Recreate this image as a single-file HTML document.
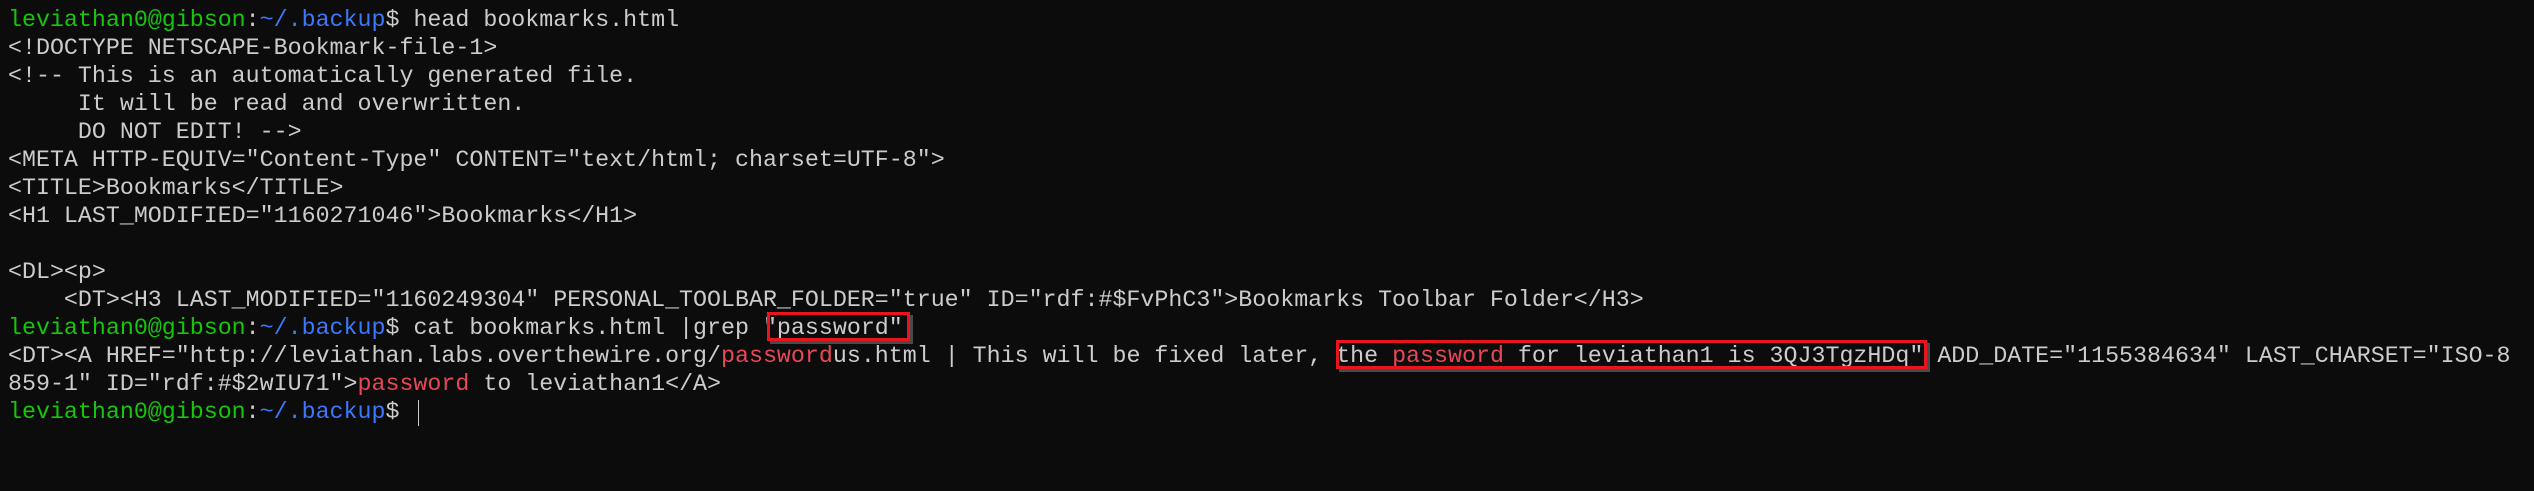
<!DOCTYPE html>
<html><head><meta charset="utf-8"><style>
html,body{margin:0;padding:0;background:#0c0c0c;width:2534px;height:491px;overflow:hidden}
pre{margin:0;position:absolute;left:8px;top:6px;font-family:"Liberation Mono",monospace;font-size:23.3px;line-height:28px;color:#cccccc;white-space:pre}
.g{color:#16c60c}.b{color:#3b78ff}.r{color:#e74856}
.box{position:absolute;border:3px solid #e8141e;box-shadow:3px 3px 0 #4a4a4a}
.cur{position:absolute;left:418px;top:400px;width:1px;height:26px;background:#ccc}
</style></head><body>
<pre><span class="g">leviathan0@gibson</span>:<span class="b">~/.backup</span>$ head bookmarks.html
&lt;!DOCTYPE NETSCAPE-Bookmark-file-1&gt;
&lt;!-- This is an automatically generated file.
     It will be read and overwritten.
     DO NOT EDIT! --&gt;
&lt;META HTTP-EQUIV="Content-Type" CONTENT="text/html; charset=UTF-8"&gt;
&lt;TITLE&gt;Bookmarks&lt;/TITLE&gt;
&lt;H1 LAST_MODIFIED="1160271046"&gt;Bookmarks&lt;/H1&gt;

&lt;DL&gt;&lt;p&gt;
    &lt;DT&gt;&lt;H3 LAST_MODIFIED="1160249304" PERSONAL_TOOLBAR_FOLDER="true" ID="rdf:#$FvPhC3"&gt;Bookmarks Toolbar Folder&lt;/H3&gt;
<span class="g">leviathan0@gibson</span>:<span class="b">~/.backup</span>$ cat bookmarks.html |grep "password"
&lt;DT&gt;&lt;A HREF="http://leviathan.labs.overthewire.org/<span class="r">password</span>us.html | This will be fixed later, the <span class="r">password</span> for leviathan1 is 3QJ3TgzHDq" ADD_DATE="1155384634" LAST_CHARSET="ISO-8
859-1" ID="rdf:#$2wIU71"&gt;<span class="r">password</span> to leviathan1&lt;/A&gt;
<span class="g">leviathan0@gibson</span>:<span class="b">~/.backup</span>$ </pre>
<div class="box" style="left:767px;top:312px;width:137px;height:23px"></div>
<div class="box" style="left:1336px;top:340px;width:585px;height:23px"></div>
<div class="cur"></div>
</body></html>
